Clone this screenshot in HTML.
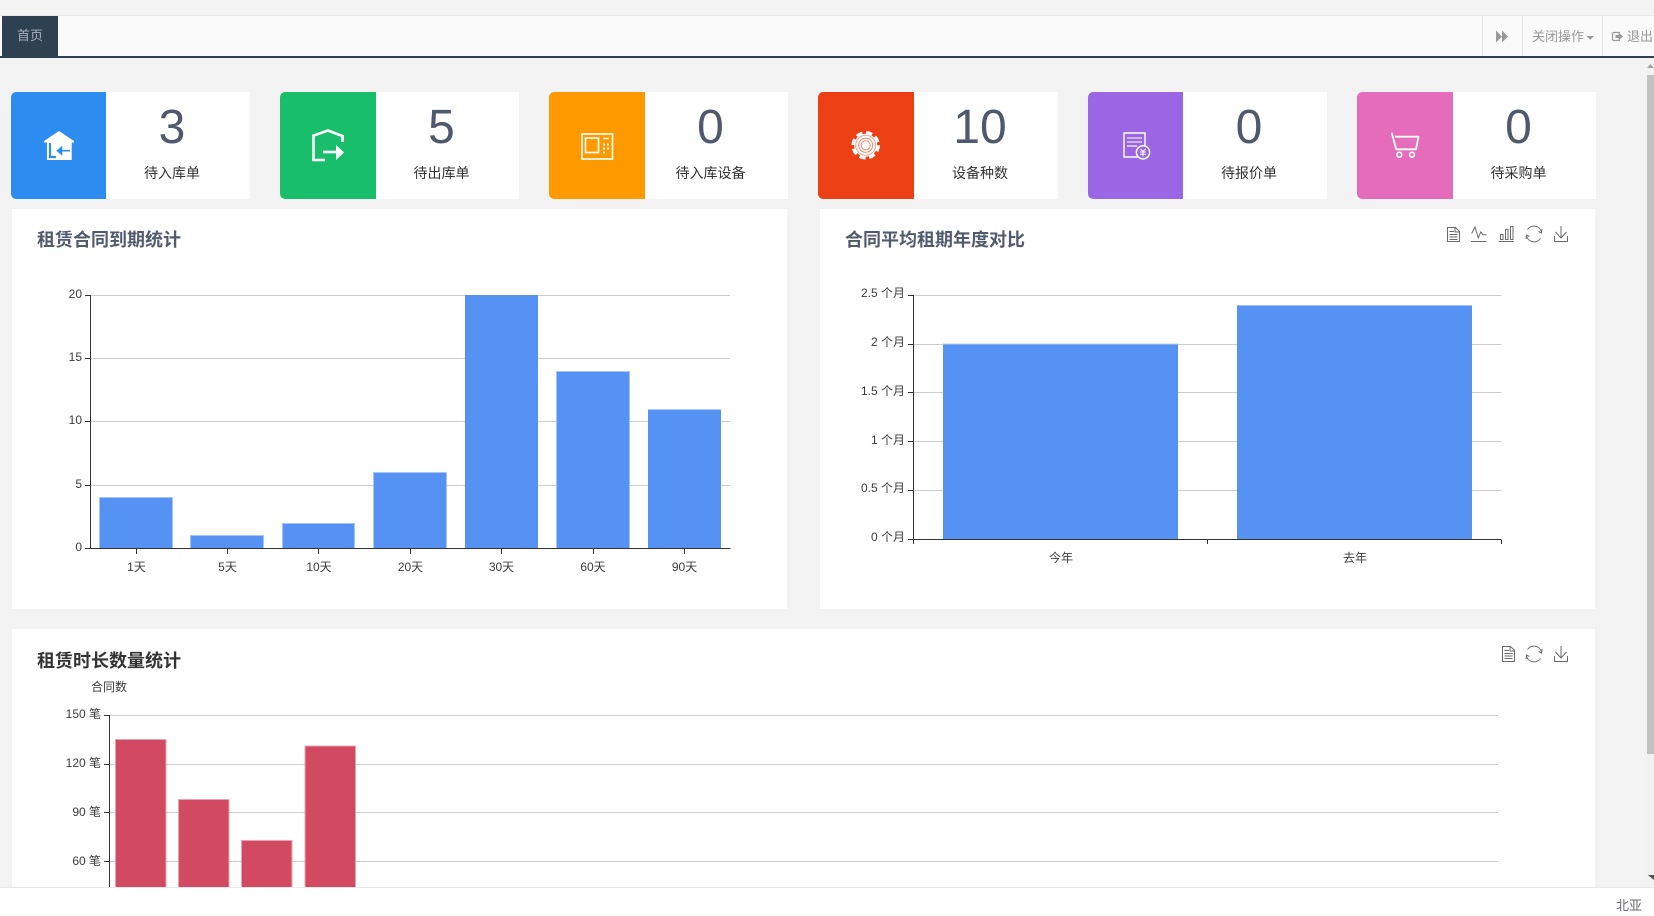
<!DOCTYPE html>
<html lang="zh-CN">
<head>
<meta charset="utf-8">
<title>首页</title>
<style>
*{box-sizing:border-box}
html,body{margin:0;padding:0;width:1654px;height:916px;overflow:hidden;background:#f3f3f4;font-family:"Liberation Sans","Noto Sans CJK SC",sans-serif;color:#333}
.abs{position:absolute}
#bar{left:0;top:15px;width:1654px;height:43px;background:#fafafa;border-top:1px solid #e7e7e7;border-bottom:2px solid #2f4050}
#tab{left:2px;top:16px;width:56px;height:40px;background:#2f4050;color:#a7b1c2;font-size:13px;line-height:39px;text-align:center}
.sep{top:16px;width:1px;height:40px;background:#e7e7e7}
.rt{top:17px;height:40px;line-height:39px;font-size:13px;color:#999;white-space:nowrap}
.card{top:92px;width:239px;height:107px;background:#fff}
.card .c{position:absolute;left:0;top:0;width:95px;height:107px;border-radius:5px 0 0 5px}
.card .n{position:absolute;left:95px;right:12px;top:0;text-align:center;font-size:48px;line-height:71px;height:71px;color:#4f586c}
.card .l{position:absolute;left:95px;right:12px;top:71px;text-align:center;font-size:14px;line-height:20px;color:#333}
.panel{background:#fff;left:12px}
.title{font-size:18px;font-weight:bold;line-height:26px;white-space:nowrap}
#svg{left:0;top:0}
#foot{left:0;top:887px;width:1654px;height:29px;background:#fff;border-top:1px solid #e7e7e7}
#foot span{position:absolute;left:1616px;top:9px;font-size:13px;line-height:18px;color:#676a6c}
#sb{left:1647px;top:58px;width:7px;height:829px;background:#f1f1f1}
#th{left:1647px;top:75px;width:7px;height:679px;background:#c1c1c1}
svg text{font-family:"Liberation Sans","Noto Sans CJK SC",sans-serif;font-size:12px;fill:#3c3c3c}
</style>
</head>
<body>
<div class="abs" id="bar"></div>
<div class="abs" id="tab">首页</div>
<div class="abs sep" style="left:1482px"></div>
<div class="abs sep" style="left:1522px"></div>
<div class="abs sep" style="left:1602px"></div>
<div class="abs rt" style="left:1532px">关闭操作</div>
<div class="abs rt" style="left:1627px;width:27px;overflow:hidden">退出</div>

<div class="abs card" style="left:11px"><div class="c" style="background:#2d8cf0"></div><div class="n">3</div><div class="l">待入库单</div></div>
<div class="abs card" style="left:280px"><div class="c" style="background:#19be6b;width:96px"></div><div class="n" style="left:96px">5</div><div class="l" style="left:96px">待出库单</div></div>
<div class="abs card" style="left:549px"><div class="c" style="background:#ff9900;width:96px"></div><div class="n" style="left:96px">0</div><div class="l" style="left:96px">待入库设备</div></div>
<div class="abs card" style="left:818px;width:240px"><div class="c" style="background:#ed3f14;width:96px"></div><div class="n" style="left:96px">10</div><div class="l" style="left:96px">设备种数</div></div>
<div class="abs card" style="left:1088px"><div class="c" style="background:#9a66e4"></div><div class="n">0</div><div class="l">待报价单</div></div>
<div class="abs card" style="left:1357px"><div class="c" style="background:#e46cbb;width:96px"></div><div class="n" style="left:96px">0</div><div class="l" style="left:96px">待采购单</div></div>

<div class="abs panel" style="top:209px;width:775px;height:400px"></div>
<div class="abs panel" style="left:820px;top:209px;width:775px;height:400px"></div>
<div class="abs panel" style="top:629px;width:1583px;height:258px"></div>
<div class="abs title" style="left:37px;top:227px;color:#515a6e">租赁合同到期统计</div>
<div class="abs title" style="left:845px;top:227px;color:#515a6e">合同平均租期年度对比</div>
<div class="abs title" style="left:37px;top:648px;color:#333">租赁时长数量统计</div>

<svg class="abs" id="svg" width="1654" height="916" viewBox="0 0 1654 916" xmlns="http://www.w3.org/2000/svg">
  <!-- top icons -->
  <path d="M1496 30.5 L1502 36.5 L1496 42.5Z M1502 30.5 L1508 36.5 L1502 42.5Z" fill="#999"/>
  <path d="M1586.5 36 h7.5 l-3.75 3.75z" fill="#999"/>
  <path d="M1620 32.5 h-6 a1.5 1.5 0 0 0 -1.5 1.5 v5 a1.5 1.5 0 0 0 1.5 1.5 h6" fill="none" stroke="#999" stroke-width="1.2"/>
  <path d="M1615.5 35 h3 v-2.5 l4.5 4 -4.5 4 v-2.5 h-3z" fill="#999"/>

  <!-- card icons -->
  <path d="M59 131 L74 141 V142.5 H71.7 V160 H47 V142.5 H44 V141Z" fill="#fff"/>
  <path d="M50 143 V157 H56" fill="none" stroke="#2d8cf0" stroke-width="2.2"/>
  <path d="M70 150.7 H61 M61.5 147.5 L57.5 150.7 61.5 154Z" fill="#2d8cf0" stroke="#2d8cf0" stroke-width="1.6"/>

  <path d="M325 160 H313.5 V135.5 L328 130.5 L342.5 136 V142" fill="none" stroke="#fff" stroke-width="2.6"/>
  <path d="M323 152 H338" stroke="#fff" stroke-width="2.6"/>
  <path d="M336 145 L344 152.5 336 160Z" fill="#fff"/>

  <rect x="582" y="134" width="30.5" height="25" fill="none" stroke="#fff" stroke-width="1.6"/>
  <rect x="585.5" y="138" width="13" height="14.5" fill="none" stroke="#fff" stroke-width="1.6"/>
  <path d="M603 138.5 H609" stroke="#fff" stroke-width="1.4"/>
  <path d="M603 143.5h2v2h-2z M607 143.5h2v2h-2z M603 147.5h2v2h-2z M607 147.5h2v2h-2z M603 151.5h2v2h-2z" fill="#fff"/>

  <circle cx="865.7" cy="145.3" r="12.2" fill="none" stroke="#fff" stroke-width="4" stroke-dasharray="6 3.58"/>
  <circle cx="865.7" cy="145.3" r="11.5" fill="#fff"/>
  <circle cx="865.7" cy="145.3" r="10" fill="none" stroke="#f4a48f" stroke-width="1"/>
  <circle cx="865.7" cy="145.3" r="7" fill="none" stroke="#f28a70" stroke-width="1"/>
  <circle cx="865.7" cy="145.3" r="4.5" fill="none" stroke="#f28a70" stroke-width="1"/>

  <path d="M1141 157 H1124 V133 H1145 V147" fill="none" stroke="#fff" stroke-width="1.4"/>
  <path d="M1127 138 H1142 M1127 142 H1142" stroke="#e3d2fa" stroke-width="1.6"/>
  <path d="M1127 146 H1137" stroke="#fff" stroke-width="1.2"/>
  <circle cx="1143" cy="152.3" r="6.6" fill="#9a66e4" stroke="#fff" stroke-width="1.5"/>
  <path d="M1140.5 149 L1143 151.5 1145.5 149 M1140 152 H1146 M1140 154.2 H1146 M1143 151.5 V156.5" fill="none" stroke="#fff" stroke-width="1"/>

  <path d="M1391.7 132.7 L1396.2 149.3 H1416 L1418.5 136.7 H1395" fill="none" stroke="#fff" stroke-width="1.8" stroke-linejoin="round"/>
  <circle cx="1399.3" cy="154.7" r="2.4" fill="none" stroke="#fff" stroke-width="1.6"/>
  <circle cx="1412" cy="154.7" r="2.4" fill="none" stroke="#fff" stroke-width="1.6"/>

  <!-- chart 1 -->
  <g stroke="#ccc" fill="none">
    <path d="M90 295.5H730 M90 358.5H730 M90 421.5H730 M90 485.5H730"/>
  </g>
  <g fill="#5592f3" stroke="#a5c4f9" stroke-width="1">
    <rect x="99.5" y="497.5" width="73" height="51"/>
    <rect x="190.5" y="535.5" width="73" height="13"/>
    <rect x="282.5" y="523.5" width="72" height="25"/>
    <rect x="373.5" y="472.5" width="73" height="76"/>
    <rect x="465" y="295" width="73" height="253.5" stroke="none"/>
    <rect x="556.5" y="371.5" width="73" height="177"/>
    <rect x="648" y="409.5" width="73" height="139" stroke="none"/>
  </g>
  <path d="M90.5 295V548.5 M85 295.5H90 M85 358.5H90 M85 421.5H90 M85 485.5H90 M85 548.5H730.5 M136.5 549V554 M227.5 549V554 M318.5 549V554 M410.5 549V554 M501.5 549V554 M593.5 549V554 M684.5 549V554" stroke="#333" fill="none"/>
  <g text-anchor="end">
    <text x="82" y="298">20</text><text x="82" y="361">15</text><text x="82" y="424">10</text><text x="82" y="488">5</text><text x="82" y="551">0</text>
  </g>
  <g text-anchor="middle">
    <text x="136.5" y="571">1天</text><text x="227.5" y="571">5天</text><text x="319" y="571">10天</text><text x="410.5" y="571">20天</text><text x="501.5" y="571">30天</text><text x="593" y="571">60天</text><text x="684.5" y="571">90天</text>
  </g>

  <!-- chart 2 -->
  <path d="M913 295.5H1501.5 M913 344.5H1501.5 M913 392.5H1501.5 M913 441.5H1501.5 M913 490.5H1501.5" stroke="#ccc" fill="none"/>
  <rect x="943" y="344" width="235" height="195.5" fill="#5592f3"/>
  <rect x="943" y="343.5" width="235" height="1" fill="#b5cffa"/>
  <rect x="1237" y="305.5" width="235" height="234" fill="#5592f3"/>
  <rect x="1237" y="305" width="235" height="1" fill="#9dbff8"/>
  <path d="M913.5 295V544 M908 295.5H913 M908 344.5H913 M908 392.5H913 M908 441.5H913 M908 490.5H913 M908 539.5H1501.5 M1207.5 540V544 M1501.5 540V544" stroke="#333" fill="none"/>
  <g text-anchor="end">
    <text x="905" y="297">2.5 个月</text><text x="905" y="346">2 个月</text><text x="905" y="395">1.5 个月</text><text x="905" y="444">1 个月</text><text x="905" y="492">0.5 个月</text><text x="905" y="541">0 个月</text>
  </g>
  <g text-anchor="middle">
    <text x="1061" y="562">今年</text><text x="1355" y="562">去年</text>
  </g>

  <!-- chart 3 -->
  <path d="M109 715.5H1498 M109 764.5H1498 M109 812.5H1498 M109 861.5H1498" stroke="#ccc" fill="none"/>
  <g fill="#d14a61" stroke="#e9a3b0" stroke-width="1">
    <rect x="115.5" y="739.5" width="50.5" height="170"/>
    <rect x="178.5" y="799.5" width="50.5" height="110"/>
    <rect x="241.5" y="840.5" width="50.5" height="70"/>
    <rect x="305" y="746" width="50.5" height="165"/>
  </g>
  <path d="M109.5 715V890 M104 715.5H109 M104 764.5H109 M104 812.5H109 M104 861.5H109" stroke="#333" fill="none"/>
  <g text-anchor="end">
    <text x="101" y="718">150 笔</text><text x="101" y="767">120 笔</text><text x="101" y="816">90 笔</text><text x="101" y="865">60 笔</text>
  </g>
  <text x="91" y="691">合同数</text>

  <!-- toolbox panel 2 -->
  <g fill="none" stroke="#6b6b6b" stroke-width="1">
    <path d="M1447.5 227.5H1455.5L1459.5 231.5V241.5H1447.5Z M1455 227.5V232H1459.5 M1449.5 231.5H1454 M1449.5 234.5H1457.5 M1449.5 237H1457.5 M1449.5 239.5H1457.5"/>
    <path d="M1471 241.5H1486.5 M1471.7 233.5L1475 227 1478.3 238 1480.7 232 1482.7 234.5 1486.5 235"/>
    <path d="M1499 241.5H1513.7 M1500.5 234.5h2.5v5h-2.5z M1505.5 229.5h2.5v10h-2.5z M1510.5 226.5h2.5v13h-2.5z"/>
    <path d="M1527.5 229.5A7.8 7.8 0 0 1 1541.5 232 M1540.5 238.5A7.8 7.8 0 0 1 1526.5 236 M1538.5 231.5L1541.5 233 1542 229 M1529.5 236.5L1526.5 235 1526 239"/>
    <path d="M1561 226V238 M1555.5 232L1561 238 1566.5 232 M1554.5 236V241.5H1567.5V236"/>
  </g>
  <!-- toolbox panel 3 -->
  <g fill="none" stroke="#6b6b6b" stroke-width="1">
    <path d="M1502.5 646.5H1510.5L1514.5 650.5V661.5H1502.5Z M1510 646.5V651H1514.5 M1504.5 650.5H1509 M1504.5 653.5H1512.5 M1504.5 656H1512.5 M1504.5 658.5H1512.5"/>
    <path d="M1527.5 649.5A7.8 7.8 0 0 1 1541.5 652 M1540.5 658.5A7.8 7.8 0 0 1 1526.5 656 M1538.5 651.5L1541.5 653 1542 649 M1529.5 656.5L1526.5 655 1526 659"/>
    <path d="M1561 646V658 M1555.5 652L1561 658 1566.5 652 M1554.5 656V661.5H1567.5V656"/>
  </g>
</svg>

<div class="abs" id="sb"></div>
<div class="abs" id="th"></div>
<svg class="abs" style="left:1647px;top:58px" width="7" height="829" viewBox="0 0 7 829" xmlns="http://www.w3.org/2000/svg">
  <path d="M3.5 6L7 10H0Z" fill="#a3a3a3"/>
  <path d="M1 817H7V822Z" fill="#505050"/>
</svg>
<div class="abs" id="foot"><span>北亚</span></div>
</body>
</html>
